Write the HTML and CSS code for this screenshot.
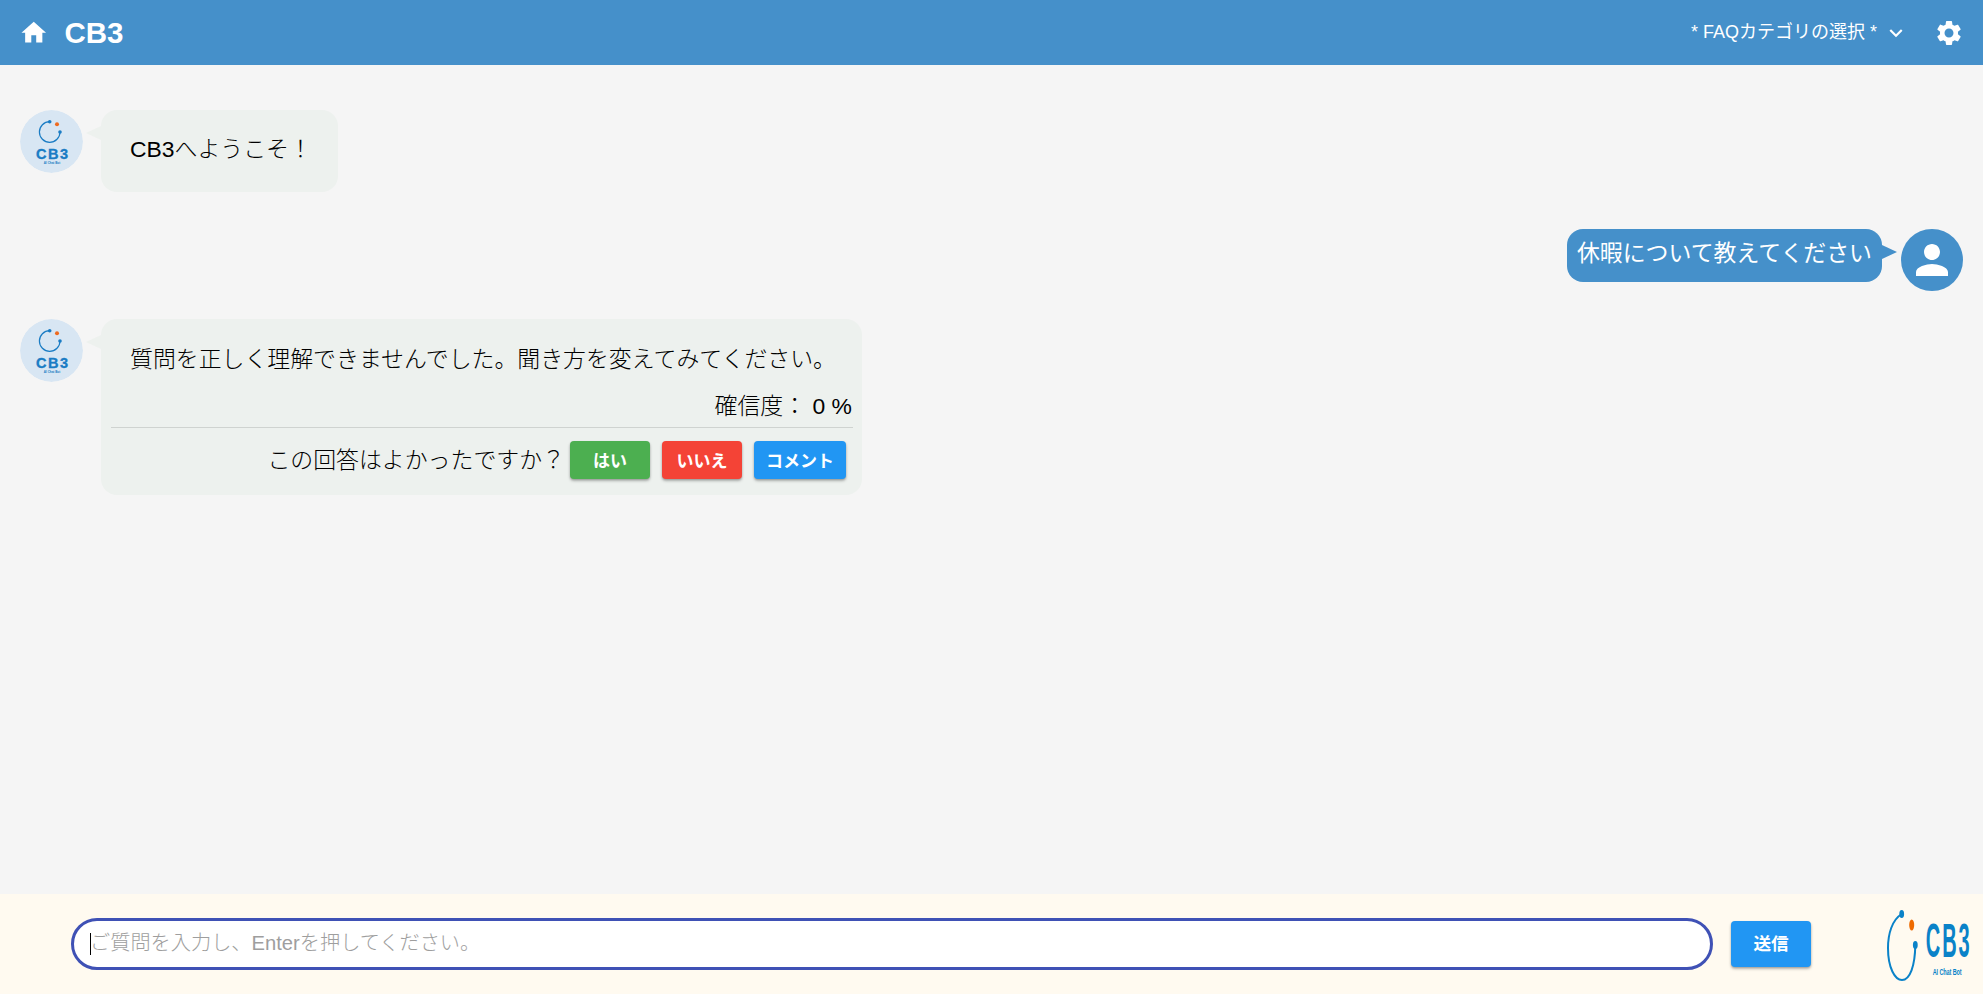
FILE: index.html
```html
<!DOCTYPE html>
<html lang="ja">
<head>
<meta charset="utf-8">
<title>CB3</title>
<link rel="stylesheet" href="styles.css">
</head>
<body>
<div class="app">
  <header class="topbar">
    <svg class="icon-home" viewBox="0 0 24 24"><path d="M10 20v-6h4v6h5v-8h3L12 3 2 12h3v8z"/></svg>
    <h1 class="title">CB3</h1>
    <div class="category">
      <span class="category-label">* FAQカテゴリの選択 *</span>
      <svg class="icon-chevron" viewBox="0 0 24 24"><path d="M7.41 8.59 12 13.17l4.59-4.58L18 10l-6 6-6-6z"/></svg>
    </div>
    <svg class="icon-gear" viewBox="0 0 24 24"><path d="M19.14 12.94c.04-.3.06-.61.06-.94 0-.32-.02-.64-.07-.94l2.03-1.58c.18-.14.23-.41.12-.61l-1.92-3.32c-.12-.22-.37-.29-.59-.22l-2.39.96c-.5-.38-1.03-.7-1.62-.94l-.36-2.54c-.04-.24-.24-.41-.48-.41h-3.84c-.24 0-.43.17-.47.41l-.36 2.54c-.59.24-1.13.57-1.62.94l-2.39-.96c-.22-.08-.47 0-.59.22L2.74 8.87c-.12.21-.08.47.12.61l2.03 1.58c-.05.3-.09.63-.09.94s.02.64.07.94l-2.03 1.58c-.18.14-.23.41-.12.61l1.92 3.32c.12.22.37.29.59.22l2.39-.96c.5.38 1.03.7 1.62.94l.36 2.54c.05.24.24.41.48.41h3.84c.24 0 .44-.17.47-.41l.36-2.54c.59-.24 1.13-.56 1.62-.94l2.39.96c.22.08.47 0 .59-.22l1.92-3.32c.12-.22.07-.47-.12-.61l-2.01-1.58zM12 15.6c-1.98 0-3.6-1.62-3.6-3.6s1.62-3.6 3.6-3.6 3.6 1.62 3.6 3.6-1.62 3.6-3.6 3.6z"/></svg>
  </header>

  <main class="chat">
    <div class="row row-bot row-first">
      <svg class="avatar avatar-bot" viewBox="0 0 63 63">
        <circle cx="31.5" cy="31.5" r="31.5" fill="#d8e6f3"/>
        <path d="M29.7 11.7A10.3 10.3 0 1 0 40 22" fill="none" stroke="#1a7cc4" stroke-width="1.2"/>
        <circle cx="29.7" cy="11.7" r="1.8" fill="#1a7cc4"/>
        <circle cx="40" cy="22" r="1.8" fill="#1a7cc4"/>
        <circle cx="37" cy="14.3" r="2" fill="#ee6a1f"/>
        <text class="logo-text" x="16" y="49" font-size="14.5" textLength="32">CB3</text>
        <text class="logo-small" x="32" y="53.5" text-anchor="middle" font-size="3">AI Chat Bot</text>
      </svg>
      <div class="bubble bubble-bot bubble-short">CB3へようこそ！</div>
    </div>

    <div class="row row-user">
      <div class="bubble bubble-user">休暇について教えてください</div>
      <div class="avatar-user">
        <svg class="icon-user" viewBox="0 0 24 24"><path d="M12 12c2.21 0 4-1.79 4-4s-1.79-4-4-4-4 1.79-4 4 1.79 4 4 4zm0 2c-2.67 0-8 1.34-8 4v2h16v-2c0-2.66-5.33-4-8-4z"/></svg>
      </div>
    </div>

    <div class="row row-bot">
      <svg class="avatar avatar-bot" viewBox="0 0 63 63">
        <circle cx="31.5" cy="31.5" r="31.5" fill="#d8e6f3"/>
        <path d="M29.7 11.7A10.3 10.3 0 1 0 40 22" fill="none" stroke="#1a7cc4" stroke-width="1.2"/>
        <circle cx="29.7" cy="11.7" r="1.8" fill="#1a7cc4"/>
        <circle cx="40" cy="22" r="1.8" fill="#1a7cc4"/>
        <circle cx="37" cy="14.3" r="2" fill="#ee6a1f"/>
        <text class="logo-text" x="16" y="49" font-size="14.5" textLength="32">CB3</text>
        <text class="logo-small" x="32" y="53.5" text-anchor="middle" font-size="3">AI Chat Bot</text>
      </svg>
      <div class="bubble bubble-bot bubble-answer">
        <p class="answer">質問を正しく理解できませんでした。聞き方を変えてみてください。</p>
        <p class="confidence">確信度： 0 %</p>
        <hr class="divider">
        <div class="feedback">
          <span class="feedback-label">この回答はよかったですか？</span>
          <button class="btn btn-green" type="button">はい</button>
          <button class="btn btn-red" type="button">いいえ</button>
          <button class="btn btn-blue" type="button">コメント</button>
        </div>
      </div>
    </div>
  </main>

  <footer class="composer">
    <div class="question-wrap">
      <input class="question" type="text" placeholder="ご質問を入力し、Enterを押してください。">
      <span class="caret"></span>
    </div>
    <button class="btn btn-blue btn-send" type="button">送信</button>
    <svg class="brand" viewBox="0 0 90 77">
      <path d="M16.7 8C7 14 3 28 3 42C3 62 10 74 17 74C25 74 30 60 30.3 39" fill="none" stroke="#0a82c8" stroke-width="2"/>
      <ellipse cx="16.7" cy="8" rx="2.4" ry="4" fill="#0a82c8"/>
      <ellipse cx="30.3" cy="39" rx="2.4" ry="4" fill="#0a82c8"/>
      <ellipse cx="26.7" cy="19" rx="2.5" ry="5.5" fill="#ee6a00"/>
      <text class="brand-text" transform="translate(40.7 51) scale(1 2.4)" font-size="20" textLength="44">CB3</text>
      <text class="brand-small" transform="translate(47.7 68.5) scale(1 1.5)" font-size="5.5" textLength="29">AI Chat Bot</text>
    </svg>
  </footer>
</div>
</body>
</html>
```

FILE: styles.css
```css
* {
  box-sizing: border-box;
}

html,
body {
  margin: 0;
  height: 100%;
}

body {
  font-family: "Liberation Sans", "Noto Sans CJK JP", sans-serif;
  font-weight: 300;
  color: #000;
  background: #f5f5f5;
}

.app {
  display: flex;
  flex-direction: column;
  height: 100vh;
  overflow: hidden;
}

.topbar {
  flex: 0 0 65px;
  display: flex;
  align-items: center;
  padding: 0 19px;
  background: #4590ca;
  color: #fff;
}

.icon-home {
  width: 29.5px;
  height: 29.5px;
  fill: #fff;
  flex: none;
}

.icon-gear {
  width: 30px;
  height: 30px;
  fill: #fff;
  flex: none;
}

.title {
  margin: 0 0 0 16px;
  font-size: 29.5px;
  font-weight: 700;
}

.category {
  margin-left: auto;
  margin-right: 25px;
  display: flex;
  align-items: center;
  gap: 6px;
  font-size: 18px;
  font-weight: 400;
}

.category-label {
  margin-bottom: 5px;
}

.icon-chevron {
  width: 26px;
  height: 26px;
  fill: #fff;
}

.chat {
  flex: 1;
  min-height: 0;
  padding: 45px 20px 0;
}

.row {
  display: flex;
  align-items: flex-start;
}

.row-bot {
  gap: 18px;
}

.row-first {
  margin-bottom: 37px;
}

.row-user {
  justify-content: flex-end;
  gap: 19px;
  margin-bottom: 28px;
}

.avatar {
  width: 63px;
  height: 63px;
  flex: none;
  border-radius: 50%;
}

.avatar-user {
  width: 62px;
  height: 62px;
  flex: none;
  display: flex;
  align-items: center;
  justify-content: center;
  border-radius: 50%;
  background: #4590ca;
}

.icon-user {
  width: 48px;
  height: 48px;
  fill: #fff;
}

.logo-text {
  font-family: "Liberation Sans", sans-serif;
  font-weight: 700;
  fill: #1a7cc4;
  stroke: #1a7cc4;
  stroke-width: 0.35px;
}

.logo-small {
  font-family: "Liberation Sans", sans-serif;
  font-weight: 700;
  fill: #1a7cc4;
}

.bubble {
  position: relative;
  border-radius: 16px;
  font-size: 22.9px;
  line-height: 30px;
}

.bubble::before {
  content: "";
  position: absolute;
  top: 16px;
  border-style: solid;
  border-color: transparent;
}

.bubble-bot {
  background: #edf1ee;
}

.bubble-bot::before {
  left: -15px;
  border-width: 7.5px 15px 7.5px 0;
  border-right-color: #edf1ee;
}

.bubble-short {
  padding: 24px 26px 28px 29px;
}

.bubble-answer {
  padding: 25px 9px 16px 10px;
}

.bubble-user {
  padding: 9px 10px 14px;
  background: #4590ca;
  color: #fff;
  font-weight: 400;
}

.bubble-user::before {
  right: -15px;
  border-width: 7.5px 0 7.5px 15px;
  border-left-color: #4590ca;
}

.answer {
  margin: 0;
  padding: 0 17px 0 19px;
}

.confidence {
  margin: 17px 1px 0 0;
  text-align: right;
}

.divider {
  margin: 6px 0 13px;
  border: 0;
  border-top: 1px solid #cfd3d0;
}

.feedback {
  display: flex;
  align-items: center;
  justify-content: flex-end;
  gap: 12px;
  padding-right: 7px;
}

.feedback-label {
  margin-right: -7px;
}

.btn {
  height: 38px;
  min-width: 80px;
  padding: 0 12px 2px;
  border: 0;
  border-radius: 4px;
  color: #fff;
  font-family: "Roboto", "Noto Sans CJK JP", sans-serif;
  font-size: 17px;
  font-weight: 700;
  box-shadow: 0 2px 3px rgba(0, 0, 0, 0.25), 0 1px 2px rgba(0, 0, 0, 0.15);
}

.btn-green {
  background: #4caf50;
}

.btn-red {
  background: #f44336;
}

.btn-blue {
  background: #2196f3;
}

.composer {
  flex: 0 0 100px;
  display: flex;
  align-items: center;
  padding: 0 8px 0 71px;
  background: #fffaf0;
}

.question-wrap {
  position: relative;
  flex: 1;
  min-width: 0;
}

.question {
  display: block;
  width: 100%;
  height: 52px;
  padding: 0 16px 2px;
  border: 3px solid #3f51b5;
  border-radius: 26px;
  outline: none;
  background: #fff;
  color: #000;
  font-family: "Liberation Sans", "Noto Sans CJK JP", sans-serif;
  font-size: 20.2px;
  font-weight: 300;
}

.question::placeholder {
  color: #9e9e9e;
  opacity: 1;
}

.caret {
  position: absolute;
  left: 19px;
  top: 15px;
  width: 1px;
  height: 22px;
  background: #000;
}

.btn-send {
  width: 80px;
  height: 46px;
  margin-left: 18px;
  flex: none;
  font-size: 17.6px;
  padding: 0 0 4px;
}

.brand {
  width: 90px;
  height: 77px;
  margin-left: 74px;
  flex: none;
}

.brand-text {
  font-family: "Liberation Sans", sans-serif;
  font-weight: 700;
  fill: #0a82c8;
}

.brand-small {
  font-family: "Liberation Sans", sans-serif;
  font-weight: 700;
  fill: #0a82c8;
}
```
